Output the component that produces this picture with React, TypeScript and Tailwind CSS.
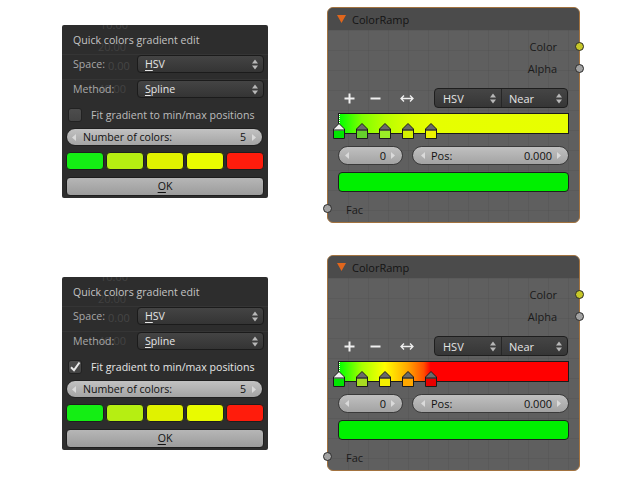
import React from "react";

function UpDown({ color = "#b8b8b8" }: { color?: string }) {
  return (
    <svg width="6" height="11" viewBox="0 0 6 11">
      <path d="M0 4.5 L3 0.5 L6 4.5 Z" fill={color} />
      <path d="M0 6.5 L3 10.5 L6 6.5 Z" fill={color} />
    </svg>
  );
}

function Tri({ dir }: { dir: "l" | "r" }) {
  return (
    <svg width="4" height="7" viewBox="0 0 4 7">
      <path d={dir === "l" ? "M4 0 L0 3.5 L4 7 Z" : "M0 0 L4 3.5 L0 7 Z"} fill="#dadada" />
    </svg>
  );
}

function Dropdown({ children }: { children: React.ReactNode }) {
  return (
    <div className="flex-1 h-[18px] rounded-[4px] border border-[#1b1b1b] bg-[linear-gradient(#444444,#343434)] flex items-center pl-[7px] pr-[5px] text-[#e6e6e6]">
      <span className="flex-1">{children}</span>
      <UpDown />
    </div>
  );
}

function Dialog({ checked }: { checked: boolean }) {
  const swatches = ["#14ee14", "#b6ee12", "#e0f200", "#e9fb00", "#ff1c0c"];
  return (
    <div className="relative w-[206px] h-[173px] bg-[#2d2d2d] rounded-[2px] overflow-hidden text-[10.6px] leading-none shrink-0">
      <div className="absolute left-0 right-0 top-[29px] h-px bg-[#353535]" />
      <div className="absolute left-0 right-0 top-[54px] h-px bg-[#353535]" />
      <div className="absolute left-[38px] top-[-6px] text-[#444444] text-[11px]">10.00</div>
      <div className="absolute left-[36px] top-[16px] text-[#414141] text-[11px]">20.00</div>
      <div className="absolute left-[46px] top-[35px] text-[#454545] text-[11px]">0.00</div>
      <div className="absolute left-[36px] top-[58px] text-[#434343] text-[11px]">40.00</div>
      <div className="relative flex flex-col px-[4px] pt-[6px]">
        <div className="h-[18px] flex items-center pl-[7px] text-[#c4c4c4]">Quick colors gradient edit</div>
        <div className="mt-[6px] h-[18px] flex items-center">
          <div className="w-[71px] pl-[7px] text-[#a8a8a8]">Space:</div>
          <Dropdown>
            <span className="underline underline-offset-2">H</span>SV
          </Dropdown>
        </div>
        <div className="mt-[7px] h-[18px] flex items-center">
          <div className="w-[71px] pl-[7px] text-[#a8a8a8]">Method:</div>
          <Dropdown>
            <span className="underline underline-offset-2">S</span>pline
          </Dropdown>
        </div>
        <div className="mt-[8px] h-[18px] flex items-center">
          <div className="ml-[2px] w-[14px] h-[14px] rounded-[3px] bg-[linear-gradient(#4d4d4d,#444444)] border border-[#222222] flex items-center justify-center">
            {checked && (
              <svg width="12" height="12" viewBox="0 0 12 12">
                <path d="M2 6.2 L5 9.2 L10.5 1.5" stroke="#e8e8e8" strokeWidth="2" fill="none" />
              </svg>
            )}
          </div>
          <span className={"ml-[9px] " + (checked ? "text-[#e6e6e6]" : "text-[#bdbdbd]")}>
            Fit gradient to min/max positions
          </span>
        </div>
        <div className="mt-[4px] mr-[1px] h-[18px] rounded-full border border-[#202020] bg-[linear-gradient(#c2c2c2,#a4a4a4)] flex items-center pl-[5px] pr-[6px] text-[#111111]">
          <Tri dir="l" />
          <span className="ml-[7px] flex-1">Number of colors:</span>
          <span>5</span>
          <span className="ml-[6px] flex">
            <Tri dir="r" />
          </span>
        </div>
        <div className="mt-[6px] flex gap-[2px] h-[18px]">
          {swatches.map((c, i) => (
            <div key={i} className="flex-1 rounded-[4px] border border-[#1e1e1e]" style={{ backgroundColor: c }} />
          ))}
        </div>
        <div className="mt-[7px] h-[19px] rounded-[4px] border border-[#1e1e1e] bg-[linear-gradient(#b6b6b6,#9c9c9c)] flex items-center justify-center text-[#111111]">
          <span className="underline underline-offset-2">O</span>K
        </div>
      </div>
    </div>
  );
}

function Marker({ color, selected }: { color: string; selected?: boolean }) {
  return (
    <svg width="12" height="16" viewBox="0 0 12 16">
      <path d="M0.5 15.5 V6 L6 0.5 L11.5 6 V15.5 Z" fill={selected ? "#f2f2f2" : "#6a6a6a"} stroke="#1a1a1a" />
      <rect x="1" y="7.5" width="10" height="7.5" fill={color} />
      <path d="M0.5 7 H11.5" stroke="#1a1a1a" />
    </svg>
  );
}

function ColorNode({ variant }: { variant: 1 | 2 }) {
  const stops =
    variant === 1
      ? ["#00e600", "#66d02c", "#9aee26", "#d5f000", "#edf200"]
      : ["#00e600", "#a8dc22", "#f4f000", "#ffa800", "#e80000"];
  const gradient =
    variant === 1
      ? "linear-gradient(to right, #00ff00 0%, #80ff00 10%, #b8ff00 20%, #d8ff00 30%, #e6ff00 40%, #e8ff00 100%)"
      : "linear-gradient(to right, #00ff00 0%, #a8ff00 10%, #ffff00 20%, #ffa600 30%, #ff5000 37%, #ff0000 40%, #ff0000 100%)";
  return (
    <div className="relative w-[253px] h-[216px] rounded-[6px] border border-[#a3733f] bg-[#5f5f5f] shrink-0 text-[11px] leading-none">
      <div className="h-[22px] rounded-t-[5px] bg-[#4b4b4b] flex items-center pl-[9px]">
        <svg width="9" height="8" viewBox="0 0 9 8">
          <path d="M0 0 H9 L4.5 8 Z" fill="#e0661c" />
        </svg>
        <span className="ml-[6px] text-[#141414]">ColorRamp</span>
      </div>
      <div className="h-[192px] rounded-b-[5px] px-[10px] bg-[linear-gradient(to_right,rgba(0,0,0,0.045)_1px,transparent_1px),linear-gradient(to_bottom,rgba(0,0,0,0.045)_1px,transparent_1px)] bg-[size:20px_20px] flex flex-col">
        <div className="mt-[8px] h-[16px] flex items-center justify-end pr-[12px] text-[#1a1a1a]">Color</div>
        <div className="mt-[6px] h-[16px] flex items-center justify-end pr-[12px] text-[#1a1a1a]">Alpha</div>
        <div className="mt-[12px] h-[20px] flex items-center">
          <svg className="ml-[6px]" width="11" height="11" viewBox="0 0 11 11">
            <path d="M5.5 0.5 V10.5 M0.5 5.5 H10.5" stroke="#f0f0f0" strokeWidth="2" />
          </svg>
          <svg className="ml-[15px]" width="11" height="11" viewBox="0 0 11 11">
            <path d="M0.5 5.5 H10.5" stroke="#f0f0f0" strokeWidth="2" />
          </svg>
          <svg className="ml-[19px]" width="14" height="9" viewBox="0 0 14 9">
            <path d="M1 4.5 H13 M4 1.5 L1 4.5 L4 7.5 M10 1.5 L13 4.5 L10 7.5" stroke="#f0f0f0" strokeWidth="1.3" fill="none" />
          </svg>
          <div className="ml-[20px] w-[134px] h-[20px] rounded-[4px] border border-[#1e1e1e] bg-[linear-gradient(#454545,#363636)] flex text-[#e4e4e4]">
            <div className="w-[66px] flex items-center pl-[8px] pr-[5px]">
              <span className="flex-1">HSV</span>
              <UpDown />
            </div>
            <div className="flex-1 border-l border-[#262626] flex items-center pl-[7px] pr-[5px]">
              <span className="flex-1">Near</span>
              <UpDown />
            </div>
          </div>
        </div>
        <div className="relative mt-[5px] h-[21px] border border-[#1a1a1a]" style={{ background: gradient }}>
          <div className="absolute left-0 top-0 h-[9px] border-l border-dotted border-white" />
          {stops.map((c, i) => (
            <div key={i} className="absolute top-[9px] flex" style={{ left: i * 23 - 6 }}>
              <Marker color={c} selected={i === 0} />
            </div>
          ))}
        </div>
        <div className="mt-[12px] h-[19px] flex gap-[9px] text-[#111111]">
          <div className="w-[65px] rounded-full border border-[#3a3a3a] bg-[linear-gradient(#c0c0c0,#a3a3a3)] flex items-center pl-[6px] pr-[7px]">
            <Tri dir="l" />
            <span className="flex-1 text-right pr-[5px]">0</span>
            <Tri dir="r" />
          </div>
          <div className="flex-1 rounded-full border border-[#3a3a3a] bg-[linear-gradient(#c0c0c0,#a3a3a3)] flex items-center pl-[8px] pr-[7px]">
            <Tri dir="l" />
            <span className="ml-[6px] flex-1">Pos:</span>
            <span className="pr-[5px]">0.000</span>
            <Tri dir="r" />
          </div>
        </div>
        <div className="mt-[7px] h-[20px] rounded-[4px] border border-[#1e1e1e] bg-[#00f000]" />
        <div className="mt-[9px] h-[16px] flex items-center pl-[8px] text-[#1a1a1a]">Fac</div>
      </div>
      <div className="absolute right-[-5px] top-[34px] w-[9px] h-[9px] rounded-full bg-[#c8c828] border border-[#2a2a2a]" />
      <div className="absolute right-[-5px] top-[56px] w-[9px] h-[9px] rounded-full bg-[#a2a2a2] border border-[#2a2a2a]" />
      <div className="absolute left-[-5px] top-[196px] w-[9px] h-[9px] rounded-full bg-[#a2a2a2] border border-[#2a2a2a]" />
    </div>
  );
}

export default function App() {
  return (
    <div className="w-[638px] h-[484px] bg-white overflow-hidden [font-family:'Open_Sans',sans-serif]">
      <div className="flex flex-col pt-[7px] gap-[32px]">
        <div className="flex items-start pl-[62px] gap-[59px]">
          <div className="mt-[18px]">
            <Dialog checked={false} />
          </div>
          <ColorNode variant={1} />
        </div>
        <div className="flex items-start pl-[62px] gap-[59px]">
          <div className="mt-[22px]">
            <Dialog checked={true} />
          </div>
          <ColorNode variant={2} />
        </div>
      </div>
    </div>
  );
}
